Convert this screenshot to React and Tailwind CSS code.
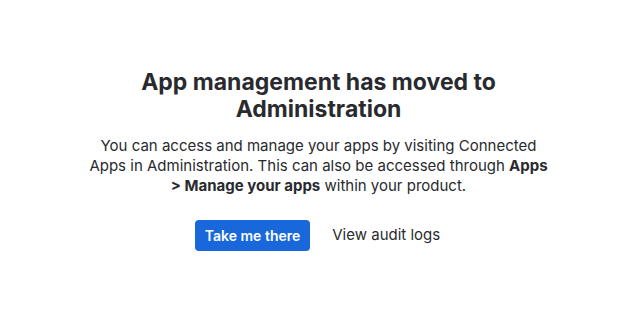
export default function App() {
  return (
    <div className="min-h-screen bg-white flex justify-center pt-[69px] font-['Inter',sans-serif] text-[#292a2e]">
      <div className="flex flex-col items-center text-center w-[470px]">
        <h1 className="text-[23px] leading-[27px] font-bold w-[400px]">
          App management has moved to Administration
        </h1>
        <p className="mt-[13px] text-[15px] leading-[20px] text-[#292a2e]">
          You can access and manage your apps by visiting Connected Apps in Administration. This can also be accessed
          through <strong className="font-bold">Apps &gt; Manage your apps</strong> within your product.
        </p>
        <div className="mt-[24px] flex items-center gap-[20px]">
          <button className="h-[31px] px-[10px] rounded-[4px] bg-[#1868db] text-white text-[14px] font-semibold">
            Take me there
          </button>
          <button className="h-[31px] px-[2px] rounded-[4px] text-[15px] text-[#292a2e]">View audit logs</button>
        </div>
      </div>
    </div>
  );
}
